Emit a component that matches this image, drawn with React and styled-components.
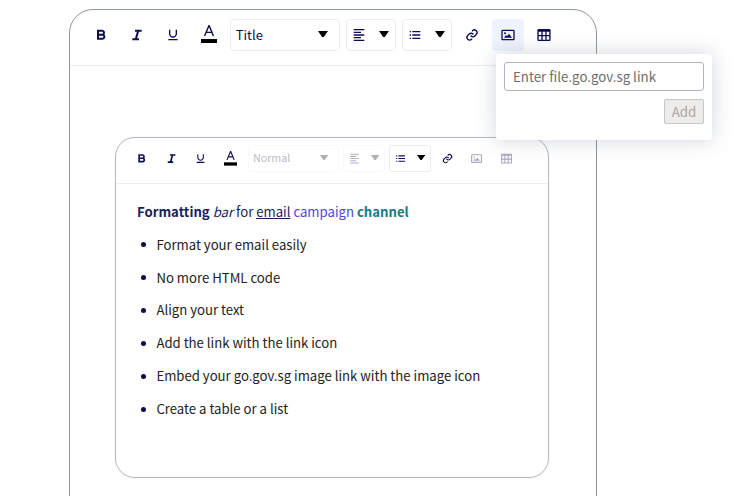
import React from 'react';
import styled, { createGlobalStyle, css } from 'styled-components';
import {
  BiBold,
  BiItalic,
  BiUnderline,
  BiAlignLeft,
  BiListUl,
  BiLink,
  BiImage,
  BiTable,
} from 'react-icons/bi';

const GlobalStyle = createGlobalStyle`
  * { box-sizing: border-box; }
  html, body { margin: 0; padding: 0; background: #fff; overflow: hidden; }
  body, input, button {
    font-family: 'Noto Sans CJK SC', 'Noto Sans', sans-serif;
  }
`;

const Page = styled.main`
  position: relative;
  width: 746px;
  height: 496px;
  padding: 9px 0 0 69px;
  overflow: hidden;
  background: #fff;
`;

const Editor = styled.section`
  width: 528px;
  height: 520px;
  border: 1px solid #8d95a8;
  border-radius: 24px;
`;

/* Toolbar dimensions are in em so that both editors share one definition. */
const Bar = styled.div`
  display: flex;
  align-items: flex-start;
  font-size: ${(p) => p.$size}px;
  height: 3.5em;
  padding: 0.5625em 0 0 ${(p) => p.$inset}px;
  border-bottom: 1px solid #ecedf0;
  color: #0c0c51;
`;

const Tool = styled.button`
  display: flex;
  align-items: center;
  justify-content: center;
  flex: none;
  width: 2em;
  height: 2em;
  margin: 0 0.25em 0 0;
  padding: 0;
  border: 0;
  border-radius: 0.25em;
  font-size: 1em;
  color: inherit;
  background: ${(p) => (p.$active ? '#f0f3fd' : 'transparent')};
  opacity: ${(p) => (p.$faded ? 0.35 : 1)};

  svg {
    width: 1em;
    height: 1em;
  }
`;

const ColorTool = styled(Tool)`
  flex-direction: column;
  margin-right: 0.3125em;
  margin-left: 0.03em;
  justify-content: flex-start;
  padding-top: 0.3125em;

  svg {
    width: 1em;
    height: 1.25em;
  }
`;

const Picker = styled.div`
  display: flex;
  align-items: center;
  justify-content: space-between;
  flex: none;
  width: ${(p) => p.$width}em;
  height: 2em;
  margin-right: ${(p) => p.$gap || 0.375}em;
  padding: 0 ${(p) => p.$end || 0.35}em 0 ${(p) => p.$start || 0.25}em;
  border: 1px solid #ebecef;
  border-radius: 0.25em;
  opacity: ${(p) => (p.$faded ? 0.3 : 1)};

  > svg:first-child {
    width: 1em;
    height: 1em;
  }
`;

const PickerText = styled.span`
  font-size: 0.81em;
  line-height: 1;
`;

const Caret = styled.svg`
  width: 0.62em;
  height: 0.38em;
  margin-bottom: 0.12em;
  fill: #000;
`;

const Content = styled.div`
  padding: 71px 0 0 45px;
`;

const Card = styled.article`
  width: 434px;
  height: 341px;
  border: 1px solid #b4bac5;
  border-radius: 20px;
  box-shadow: 0 0 1px #c6cbd3;
`;

const bodyText = css`
  font-size: 13.17px;
  line-height: 20px;
`;

const Heading = styled.p`
  ${bodyText}
  margin: 18px 0 0 21px;
  color: #1d1d5c;
  white-space: pre;
`;

const Tinted = styled.span`
  color: ${(p) => p.$color};
  font-weight: ${(p) => (p.$bold ? 700 : 400)};
`;

const List = styled.ul`
  ${bodyText}
  display: grid;
  gap: 12.9px;
  margin: 12.7px 0 0 24px;
  padding: 0;
  list-style: none;
  color: #222;
`;

const Item = styled.li`
  display: flex;
  align-items: center;
  gap: 10.4px;
  white-space: nowrap;

  &::before {
    content: '';
    width: 5px;
    height: 5px;
    margin-left: 1px;
    border-radius: 50%;
    background: #0c0c51;
  }
`;

const Popover = styled.form`
  position: absolute;
  left: 496px;
  top: 54px;
  display: flex;
  flex-direction: column;
  align-items: flex-end;
  gap: 8px;
  width: 216px;
  height: 86px;
  padding: 8px;
  border-radius: 4px;
  background: #fff;
  box-shadow: 0 0 20px rgba(104, 112, 135, 0.3);
`;

const LinkInput = styled.input`
  width: 200px;
  height: 29px;
  padding: 0 8px;
  border: 1px solid #b0b5c1;
  border-radius: 3px;
  font-size: 13.3px;
  &::placeholder {
    color: #6d6d6d;
    opacity: 1;
  }
`;

const AddButton = styled.button`
  width: 40px;
  height: 25px;
  padding: 0;
  border: 1px solid #c6c6c6;
  border-radius: 2px;
  background: #ececec;
  color: #a8a8a8;
  font-size: 13.3px;
  line-height: 20px;
`;

function Arrow() {
  return (
    <Caret viewBox="0 0 10 6" preserveAspectRatio="none" aria-hidden="true">
      <path d="M0 0h10L5.8 6H4.2z" />
    </Caret>
  );
}

function TextColorIcon() {
  return (
    <svg viewBox="0 0 16 20" aria-hidden="true">
      <path
        d="M3.6 12 7.9 1.8h.3L12.4 12M5.1 8.4h5.8"
        fill="none"
        stroke="currentColor"
        strokeWidth="1.4"
      />
      <path d="M0 15h16v4H0z" fill="#000" />
    </svg>
  );
}

function FormatBar({ size, inset, style, limited, imageOpen }) {
  return (
    <Bar $size={size} $inset={inset}>
      <Tool aria-label="Bold"><BiBold /></Tool>
      <Tool aria-label="Italic"><BiItalic /></Tool>
      <Tool aria-label="Underline"><BiUnderline /></Tool>
      <ColorTool aria-label="Text color"><TextColorIcon /></ColorTool>
      <Picker $width={6.875} $start={0.3} $end={0.7} $faded={limited}>
        <PickerText>{style}</PickerText>
        <Arrow />
      </Picker>
      <Picker $width={3.125} $faded={limited}>
        <BiAlignLeft />
        <Arrow />
      </Picker>
      <Picker $width={3.125} $gap={0.26}>
        <BiListUl />
        <Arrow />
      </Picker>
      <Tool aria-label="Link"><BiLink /></Tool>
      <Tool aria-label="Image" $active={imageOpen} $faded={limited}><BiImage /></Tool>
      <Tool aria-label="Table" $faded={limited}><BiTable /></Tool>
    </Bar>
  );
}

const features = [
  'Format your email easily',
  'No more HTML code',
  'Align your text',
  'Add the link with the link icon',
  'Embed your go.gov.sg image link with the image icon',
  'Create a table or a list',
];

export default function App() {
  return (
    <Page>
      <GlobalStyle />
      <Editor>
        <FormatBar size={16} inset={14.5} style="Title" imageOpen />
        <Content>
          <Card>
            <FormatBar size={13.15} inset={12.6} style="Normal" limited />
            <Heading>
              <b>Formatting</b> <i>bar</i> for <u>email</u>{' '}
              <Tinted $color="#4b45e0">campaign</Tinted>{' '}
              <Tinted $color="#127d85" $bold>channel</Tinted>
            </Heading>
            <List>
              {features.map((text) => <Item key={text}>{text}</Item>)}
            </List>
          </Card>
        </Content>
      </Editor>
      <Popover>
        <LinkInput placeholder="Enter file.go.gov.sg link" />
        <AddButton type="button" disabled>Add</AddButton>
      </Popover>
    </Page>
  );
}
